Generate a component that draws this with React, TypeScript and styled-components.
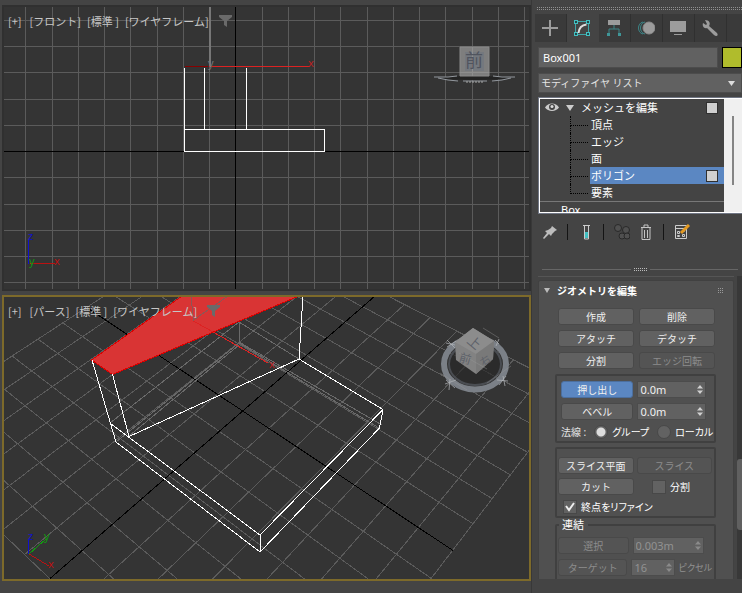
import React, { useState } from "react";
import styled, { createGlobalStyle, css } from "styled-components";

const GlobalStyle = createGlobalStyle`
  * { box-sizing: border-box; }
  body { margin: 0; background: #444; }
  body, button, input, select {
    font-family: "Noto Sans", "Noto Sans CJK JP", sans-serif;
    font-size: 11px;
    line-height: 14px;
    color: #e4e4e4;
  }
  button { padding: 0; border: 0; background: none; }
  input { margin: 0; }
`;

const Shell = styled.div`
  display: grid;
  grid-template-columns: minmax(0, 1fr) 211px;
  height: 100vh;
  overflow: hidden;
  background: #444;
`;

const Viewports = styled.main`
  display: grid;
  grid-template-rows: 1fr 1fr;
  gap: 4px;
  min-height: 0;
  padding: 5px 0 12px 2px;
`;

const ViewportFrame = styled.section<{ $active?: boolean }>`
  position: relative;
  min-height: 0;
  overflow: hidden;
  background: #343434;
  border: 2px solid ${(p) => (p.$active ? "#7d6a2a" : "#303030")};
`;

const Scene = styled.svg`
  display: block;
  width: 100%;
  height: 100%;
`;

const ViewportMenu = styled.div`
  position: absolute;
  top: 6px;
  left: 4px;
  display: flex;
  align-items: center;
  gap: 6px;
`;

const ViewportLabel = styled.button`
  font-family: "Noto Sans CJK JP", sans-serif;
  line-height: 16px;
  color: #c6c6c6;
  white-space: pre;
  &:first-child { padding-right: 2px; }
`;

const FilterButton = styled.button`
  display: block;
  padding-left: 4px;
  & > svg { display: block; }
`;

const CubeOverlay = styled.svg<{ $top: number; $right: number }>`
  position: absolute;
  top: ${(p) => p.$top}px;
  right: ${(p) => p.$right}px;
`;

const SvgLabel = styled.text<{ $size?: number }>`
  font-family: "Noto Sans", "Noto Sans CJK JP", sans-serif;
  font-size: ${(p) => p.$size ?? 11}px;
`;

const Panel = styled.aside`
  display: flex;
  flex-direction: column;
  min-width: 0;
  min-height: 0;
  padding: 7px 0 14px 6px;
  border-left: 1px solid #383838;
  font-feature-settings: "palt";
`;

const Grip = styled.div`
  flex: none;
  height: 3px;
  margin-left: -1px;
  background:
    repeating-linear-gradient(90deg, #909090 0 1px, transparent 1px 2px) top / 100% 1px no-repeat,
    repeating-linear-gradient(90deg, #909090 0 1px, transparent 1px 2px) bottom / 100% 1px no-repeat;
`;

const TabBar = styled.nav`
  display: flex;
  flex: none;
  height: 28px;
  margin: 4px 0 5px -3px;
  background: #3a3a3a;
`;

const Tab = styled.button<{ $active?: boolean }>`
  display: grid;
  place-items: center;
  width: 32px;
  background: ${(p) => (p.$active ? "#444" : "transparent")};
  border-right: 1px solid ${(p) => (p.$active ? "#444" : "#303030")};
`;

const NameRow = styled.div`
  display: flex;
  flex: none;
  gap: 4px;
  height: 21px;
  margin-bottom: 5px;
`;

const fieldBox = css`
  background: #616161;
  border: 1px solid #4c4c4c;
  border-radius: 0;
  outline: 0;
`;

const NameInput = styled.input`
  ${fieldBox}
  flex: 1;
  min-width: 0;
  padding: 0 4px;
  color: #fff;
`;

const ColorSwatch = styled.button`
  width: 20px;
  background: #b0bc2c;
  border: 1px solid #000;
`;

const SelectWrap = styled.div`
  position: relative;
  flex: none;
  margin-bottom: 4px;
`;

const ModifierSelect = styled.select`
  ${fieldBox}
  display: block;
  width: 100%;
  height: 20px;
  padding: 0 2px;
  appearance: none;
  font-size: 10px;
`;

const SelectArrow = styled.svg`
  position: absolute;
  top: 8px;
  right: 7px;
  pointer-events: none;
`;

const Stack = styled.div`
  display: flex;
  flex: none;
  height: 117px;
  margin-right: -2px;
  border: 2px solid #fff;
  outline: 1px solid #707684;
  outline-offset: -1px;
  overflow: hidden;
`;

const StackBody = styled.div`
  flex: 1;
  min-width: 0;
  overflow: hidden;
`;

const StackTrack = styled.div`
  width: 18px;
  padding: 17px 0 0 8px;
  background: #f0f0f0;
`;

const StackThumb = styled.div`
  width: 2px;
  height: 69px;
  background: #858585;
`;

const StackRow = styled.div`
  display: flex;
  align-items: center;
  height: 17px;
  padding-right: 6px;
`;

const StackName = styled.button`
  flex: 1;
  text-align: left;
  color: #fff;
`;

const ModifierIcons = styled.svg`
  flex: none;
  margin-right: 4px;
`;

const SubList = styled.ul`
  margin: 0 0 0 30px;
  padding: 0;
  list-style: none;
`;

const SubItem = styled.li<{ $last?: boolean }>`
  position: relative;
  display: flex;
  padding-left: 20px;
  &::before {
    content: "";
    position: absolute;
    top: 0;
    left: 0;
    width: 17px;
    height: 9px;
    border-bottom: 1px dotted #000;
    border-left: 1px dotted #000;
  }
  &::after {
    content: "";
    position: absolute;
    top: 9px;
    bottom: 0;
    left: 0;
    border-left: ${(p) => (p.$last ? "0" : "1px dotted #000")};
  }
`;

const SubRow = styled.div<{ $selected?: boolean }>`
  display: flex;
  flex: 1;
  align-items: center;
  height: 17px;
  padding: 0 6px 0 1px;
  background: ${(p) => (p.$selected ? "#5b87c2" : "transparent")};
`;

const StackToggle = styled.input`
  width: 12px;
  height: 12px;
  appearance: none;
  background: #d0d0d0;
  border: 1px solid #303030;
`;

const BaseObject = styled.button`
  display: block;
  width: 100%;
  padding: 2px 0 0 21px;
  border-top: 1px solid #787878;
  text-align: left;
  line-height: 12px;
  color: #fff;
`;

const Toolbar = styled.div`
  display: flex;
  flex: none;
  align-items: center;
  height: 36px;
  padding-left: 2px;
`;

const ToolButton = styled.button<{ $spaced?: boolean }>`
  display: grid;
  place-items: center;
  width: 20px;
  height: 20px;
  margin-left: ${(p) => (p.$spaced ? 4 : 0)}px;
`;

const ToolDivider = styled.span`
  width: 2px;
  height: 16px;
  margin: 0 7px;
  border-left: 1px solid #141414;
`;

const Splitter = styled.div`
  display: flex;
  flex: none;
  align-items: flex-end;
  gap: 3px;
  height: 21px;
  padding: 0 4px;
  margin-bottom: 5px;
`;

const SplitLine = styled.span`
  flex: 1;
  height: 2px;
  border-top: 1px solid #666;
`;

const SplitGrip = styled.span`
  width: 13px;
  height: 3px;
  background:
    repeating-linear-gradient(90deg, #bbb 0 1px, transparent 1px 2px) top / 100% 1px no-repeat,
    repeating-linear-gradient(90deg, #bbb 0 1px, transparent 1px 2px) bottom / 100% 1px no-repeat;
`;

const RolloutArea = styled.div`
  display: flex;
  flex: 1;
  gap: 3px;
  min-height: 0;
  overflow: hidden;
`;

const Rollouts = styled.div`
  flex: 1;
  min-width: 0;
  padding-top: 3px;
  border-top: 1px solid #555;
`;

const RolloutTrack = styled.div`
  width: 5px;
  padding-top: 183px;
  background: #383838;
`;

const RolloutThumb = styled.div`
  height: 71px;
  border-radius: 3px 0 0 3px;
  background: #606060;
`;

const Rollout = styled.section`
  padding: 0 18px 0 19px;
  background: #505050;
  border: 1px solid #414141;
  border-radius: 2px;
`;

const RolloutHeader = styled.button`
  display: flex;
  align-items: center;
  gap: 6px;
  width: calc(100% + 24px);
  height: 20px;
  margin: 0 -9px 7px -15px;
  font-weight: 700;
  font-size: 10px;
  color: #fff;
`;

const RolloutTitle = styled.span`
  flex: 1;
  text-align: left;
`;

const ButtonGrid = styled.div`
  display: grid;
  grid-template-columns: 1fr 1fr;
  gap: 5px;
`;

const PushButton = styled.button<{ $on?: boolean }>`
  height: 17px;
  min-width: 0;
  background: ${(p) => (p.$on ? "#5b87c2" : "#616161")};
  border: 1px solid ${(p) => (p.$on ? "#4c6f9e" : "#494949")};
  border-radius: 3px;
  color: #f0f0f0;
  font-size: 10px;
  line-height: 14px;
  &:disabled {
    background: #545454;
    color: #8c8c8c;
  }
`;

const Group = styled.fieldset<{ $top: number; $left: number }>`
  min-width: 0;
  margin: 4px -1px 0 -3px;
  padding: ${(p) => p.$top}px 2px 0 ${(p) => p.$left}px;
  border: 2px solid #404040;
  border-radius: 2px;
  overflow: hidden;
  font-size: 10px;
`;

const ExtrudeGroup = styled(Group)`
  margin-top: 5px;
`;

const JoinGroup = styled(Group)`
  margin-top: 0;
  height: 84px;
`;

const Legend = styled.legend`
  margin-left: 1px;
  padding: 0 4px 0 3px;
  font-size: 11px;
  color: #fff;
`;

const FormRow = styled.div<{ $gap: number; $height?: number; $after?: number }>`
  display: flex;
  align-items: center;
  gap: ${(p) => p.$gap}px;
  height: ${(p) => p.$height ?? 17}px;
  margin-bottom: ${(p) => p.$after ?? 5}px;
  white-space: nowrap;
`;

const Grow = styled.div<{ $basis: number; $end?: number }>`
  display: flex;
  align-items: center;
  flex: ${(p) => p.$basis} 1 0;
  min-width: 0;
  margin-right: ${(p) => p.$end ?? 0}px;
  & > button { flex: 1; }
`;

const SpinBox = styled.div`
  display: flex;
  align-items: center;
  width: 100%;
  height: 17px;
  ${fieldBox}
`;

const SpinInput = styled.input`
  flex: 1;
  min-width: 0;
  width: 10px;
  height: 15px;
  padding: 0 2px;
  background: none;
  border: 0;
  color: #f0f0f0;
  &:disabled { color: #929292; }
`;

const SpinArrows = styled.button`
  width: 10px;
  height: 15px;
`;

const Choice = styled.label`
  display: flex;
  align-items: center;
  gap: 4px;
  color: #fff;
`;

const ChoiceIndent = styled.div`
  padding-left: 5px;
`;

const Radio = styled.input`
  width: 14px;
  height: 14px;
  appearance: none;
  border-radius: 50%;
  background: #626262;
  border: 1px solid #484848;
  &:checked { background: radial-gradient(circle, #ddd 0 4px, #626262 5px); }
`;

const Check = styled.span`
  display: grid;
  width: 14px;
  height: 14px;
  & > * { grid-area: 1 / 1; }
`;

const CheckInput = styled.input`
  width: 14px;
  height: 14px;
  appearance: none;
  background: #626262;
  border: 1px solid #484848;
`;

const CheckMark = styled.svg`
  pointer-events: none;
`;

const Unit = styled.span`
  color: #929292;
  font-size: 9px;
`;

function project(u: number, v: number): [number, number] {
  const w = 1 - 0.021 * u + 0.0242 * v;
  return [(242.7 + 20.49 * u + 28.76 * v) / w, (411 + 8.34 * u - 9.95 * v) / w];
}

function gridPath(lines: number[]): string {
  return lines
    .map((n) => {
      const [ax, ay] = project(n, -7);
      const [bx, by] = project(n, 7);
      const [cx, cy] = project(-7, n);
      const [dx, dy] = project(7, n);
      return `M${ax} ${ay}L${bx} ${by}M${cx} ${cy}L${dx} ${dy}`;
    })
    .join("");
}

const perspectiveLines = [-7, -6, -5, -4, -3, -2, -1, 1, 2, 3, 4, 5, 6, 7];
const columns = [25, 52, 78, 104, 130, 157, 183, 209, 262, 288, 314, 340, 367, 393, 419, 445, 472, 498, 524];
const rows = [20, 46, 72, 99, 125, 177, 204, 230, 256, 282];

function Menu({ view }: { view: string }) {
  return (
    <ViewportMenu>
      {["[+]", `[${view}]`, "[標準 ]", "[ワイヤフレーム]"].map((label) => (
        <ViewportLabel key={label}>{label}</ViewportLabel>
      ))}
      <FilterButton aria-label="フィルタ">
        <svg width="13" height="12" viewBox="0 0 13 12" aria-hidden="true">
          <path d="M0 0H13V2L8 6V12L5 10V6L0 2Z" fill="#6a6a6a" />
        </svg>
      </FilterButton>
    </ViewportMenu>
  );
}

function FrontScene() {
  return (
    <Scene viewBox="4 7 525 282" preserveAspectRatio="xMinYMin slice" aria-hidden="true">
      <g fill="none" shapeRendering="crispEdges" transform="translate(.5 .5)">
        <path stroke="#5b5b5b" d={columns.map((x) => `M${x} 0V400`).join("") + rows.map((y) => `M0 ${y}H900`).join("")} />
        <path stroke="#000" d="M235 0V400M0 151H900" />
        <path stroke="#777" strokeWidth="2" d="M209 0V66" />
        <path stroke="#fff" d="M184 67V151H324V129H184M204 67V129M246 67V129" />
        <path stroke="#d22" d="M208 66H309" />
        <path stroke="#800" d="M184 66H207" />
        <path stroke="#11c" d="M28 239V263" />
        <path stroke="#b11" d="M29 263H54" />
      </g>
      <SvgLabel x="308" y="67" fill="#b22">x</SvgLabel>
      <SvgLabel x="208" y="67" fill="#777">y</SvgLabel>
      <SvgLabel x="28" y="240" fill="#11c">z</SvgLabel>
      <SvgLabel x="29" y="265" fill="#191">y</SvgLabel>
      <SvgLabel x="54" y="265" fill="#b11">x</SvgLabel>
    </Scene>
  );
}

function PerspectiveScene() {
  return (
    <Scene viewBox="4 297 525 282" preserveAspectRatio="xMinYMin slice" aria-hidden="true">
      <g fill="none" shapeRendering="crispEdges">
        <path stroke="#5b5b5b" d={gridPath(perspectiveLines)} />
        <path stroke="#000" d={gridPath([0])} />
        <path stroke="#6a6a6a" d="M110 423L239 322L299 359M116 442L239 343L379 428M129 436L239 345M239 322V343M239 342L382 425" />
        <path fill="#d93434" stroke="#d00" d="M91.5 360L112.5 374.5L299 296L182 296Z" />
        <path stroke="#8d5555" d="M191 296L193.500 320L228 296" />
        <path stroke="#d22" d="M193.500 321L268 363" />
        <path
          stroke="#fff"
          d="M92 360L110.500 423.500L116 442L260 552L379.500 428L383 409.500L299 359L303 296M112.500 374.500L129 436.500L299 359M110.500 423.500L260 535V552M260 535L383 409.500"
        />
        <path stroke="#11c" d="M28.500 539V554" />
        <path stroke="#191" d="M29 554L46 539" />
        <path stroke="#b11" d="M29 554L49 566" />
      </g>
      <SvgLabel x="269" y="368" fill="#b22">x</SvgLabel>
      <SvgLabel x="28" y="540" fill="#11c">z</SvgLabel>
      <SvgLabel x="44" y="540" fill="#191">y</SvgLabel>
      <SvgLabel x="48" y="568" fill="#b11">x</SvgLabel>
    </Scene>
  );
}

function FrontCube() {
  return (
    <CubeOverlay $top={38} $right={13} width="82" height="40" viewBox="0 0 82 40" aria-hidden="true">
      <ellipse cx="41" cy="33" rx="34" ry="2" fill="#242424" />
      <path d="M0 32H14L23 31M59 31L68 32H81M4 33L14 35L24 36M58 36L68 35L77 33M29 36H53" stroke="#92979d" strokeWidth="1" fill="none" />
      <path d="M32 37H50" stroke="#aaa" strokeDasharray="2 1" />
      <path d="M26 2H55V31H26Z" fill="#7e7e7e" stroke="#8a8a8a" />
      <path d="M31 7H50V26H31Z" fill="#74787e" />
      <path d="M38.500 2V31M26 27.500H55" stroke="#8e8e8e" />
      <SvgLabel x="31" y="22" $size={18} fill="#50545e">前</SvgLabel>
    </CubeOverlay>
  );
}

function PerspectiveCube() {
  return (
    <CubeOverlay $top={26} $right={16} width="76" height="72" viewBox="0 0 76 72" aria-hidden="true">
      <ellipse cx="38" cy="41" rx="27" ry="22" fill="#262626" fillOpacity=".65" />
      <ellipse cx="38" cy="41" rx="31" ry="25.500" fill="none" stroke="#7b8087" strokeWidth="6" />
      <ellipse cx="38" cy="41" rx="26" ry="21" fill="none" stroke="#4a4d52" strokeWidth="2" />
      <path d="M36 5L57 18L56 36L39 51L19 37L18 19Z" fill="#828282" />
      <path d="M36 5L57 18L39 31L18 19Z" fill="#8c8c8c" />
      <path d="M39 31L57 18L56 36L39 51Z" fill="#797979" />
      <path d="M10 17L18 25M10 24L19 18M9 20L18 22M58 17L62 21M62 16L59 23M8 61L19 57M9 57L18 65M13 56L12 67M60 57L71 58M62 62L69 53M66 53L68 63" stroke="#b4b7ba" strokeOpacity=".7" fill="none" />
      <path d="M46 5L62 15M3 50L30 67M50 60L74 43M22 30L50 46" stroke="#999" strokeOpacity=".4" />
      <SvgLabel x="31" y="24" $size={13} fill="#5d6169" transform="rotate(40 37 19)">上</SvgLabel>
      <SvgLabel x="22" y="40" $size={12} fill="#5d6169" transform="rotate(16 28 36)">前</SvgLabel>
      <SvgLabel x="43" y="41" $size={10} fill="#5d6169" transform="rotate(-35 48 37)">右</SvgLabel>
    </CubeOverlay>
  );
}

const tabs = [
  { name: "作成", icon: <path d="M8 0V16M0 8H16" stroke="#9c9c9c" strokeWidth="2" /> },
  {
    name: "修正",
    icon: (
      <g fill="none">
        <path d="M1.500 1.500H14.500V14.500H1.500Z" stroke="#3fa7a9" />
        <path d="M0 0H4V4H0ZM12 0H16V4H12ZM0 12H4V16H0ZM12 12H16V16H12Z" fill="#43c0c2" />
        <path d="M1 1H3V3H1ZM13 1H15V3H13ZM1 13H3V15H1ZM13 13H15V15H13Z" fill="#24494a" />
        <path d="M4.500 13C5 8 8 5 12.500 4.500" stroke="#ddd" strokeWidth="2" />
      </g>
    ),
  },
  {
    name: "階層",
    icon: (
      <g>
        <path d="M2 0H14V5H2Z" fill="#9c9c9c" />
        <path d="M8 5V9M3 13V9H13V13" fill="none" stroke="#3c8587" strokeWidth="1" />
        <path d="M1 13H4V16H1ZM12 13H15V16H12Z" fill="#3f9698" />
      </g>
    ),
  },
  {
    name: "モーション",
    icon: (
      <g fill="none" stroke="#3c8587">
        <path d="M5 2C-1 3-1 13 5 14M7 2C1 3 1 13 7 14" />
        <circle cx="11" cy="8" r="6" fill="#9c9c9c" stroke="#8c8c8c" />
      </g>
    ),
  },
  {
    name: "表示",
    icon: <path d="M0 1H16V12H0ZM4 14H12V15H4Z" fill="#9c9c9c" />,
  },
  {
    name: "ユーティリティ",
    icon: <path d="M1 3L4 5L5 4L3 0C7 0 9 3 7 6L15 13C17 16 14 17 12 15L5 8C2 9 0 6 1 3Z" fill="#9c9c9c" />,
  },
];

const glyphs = {
  pin: <path d="M10 2L15 6L13 7L10 10L9 12L7 10L2 15L1 14L5 9L3 7L6 6L9 4Z" fill="#bdbdbd" />,
  tube: (
    <g>
      <path d="M6.500 2V15H10.500V2" fill="none" stroke="#ccc" />
      <path d="M5 1.500H12" stroke="#ccc" />
      <path d="M7 8H10V14H7Z" fill="#43c0c2" />
    </g>
  ),
  rings: (
    <g fill="#505050" stroke="#292929">
      <circle cx="4" cy="4" r="3.500" />
      <circle cx="12" cy="6" r="3.500" />
      <circle cx="8" cy="12" r="3" />
      <circle cx="13" cy="12" r="3" />
    </g>
  ),
  trash: <path d="M3 3.500H13M6 3V1H10V3M4 4V15.500H12V4M6.500 6V14M9.500 6V14" fill="none" stroke="#c4c4c4" />,
  config: (
    <g fill="none">
      <path d="M1.500 1.500H12.500V14.500H1.500ZM1 4.500H12M3.500 7.500H5.500V9.500H3.500ZM8.500 7.500H10.500M3.500 11.500H5.500V12.500H3.500ZM8.500 10.500H10.500V12.500H8.500Z" stroke="#ccc" />
      <path d="M7 9L15 1" stroke="#e39a22" strokeWidth="3" />
    </g>
  ),
};

function Tool({ name, label, spaced }: { name: keyof typeof glyphs; label: string; spaced?: boolean }) {
  return (
    <ToolButton aria-label={label} $spaced={spaced}>
      <svg width="16" height="16" viewBox="0 0 16 16" aria-hidden="true">{glyphs[name]}</svg>
    </ToolButton>
  );
}

function Spinner({ label, initial, disabled }: { label: string; initial: string; disabled?: boolean }) {
  const [value, setValue] = useState(initial);
  return (
    <SpinBox>
      <SpinInput aria-label={label} value={value} disabled={disabled} onChange={(e) => setValue(e.target.value)} />
      <SpinArrows aria-label={`${label} 増減`} disabled={disabled}>
        <svg width="6" height="9" viewBox="0 0 6 9" aria-hidden="true">
          <path d="M0 3.500L3 0L6 3.500ZM0 5.500L3 9L6 5.500Z" fill={disabled ? "#8a8a8a" : "#d0d0d0"} />
        </svg>
      </SpinArrows>
    </SpinBox>
  );
}

function CheckChoice({ label, initial }: { label: string; initial?: boolean }) {
  const [checked, setChecked] = useState(!!initial);
  return (
    <Choice>
      <Check>
        <CheckInput type="checkbox" checked={checked} onChange={() => setChecked(!checked)} />
        {checked && (
          <CheckMark width="14" height="14" viewBox="0 0 14 14" aria-hidden="true">
            <path d="M3 6L6 10L11 3" fill="none" stroke="#eee" strokeWidth="2" />
          </CheckMark>
        )}
      </Check>
      {label}
    </Choice>
  );
}

function ModifierStack() {
  const [selected, setSelected] = useState("ポリゴン");
  const levels = ["頂点", "エッジ", "面", "ポリゴン", "要素"];
  return (
    <Stack>
      <StackBody>
        <StackRow>
          <ModifierIcons width="37" height="11" viewBox="0 0 37 11" aria-hidden="true">
            <path d="M5 5.500C8 0 16 0 19 5.500C16 10 8 10 5 5.500Z" fill="#ccc" />
            <circle cx="12" cy="5" r="3" fill="#444" />
            <circle cx="12" cy="4.500" r="1.500" fill="#ddd" />
            <path d="M26 3H34L30 9Z" fill="#ccc" />
          </ModifierIcons>
          <StackName>メッシュを編集</StackName>
          <StackToggle type="checkbox" aria-label="メッシュを編集" />
        </StackRow>
        <SubList>
          {levels.map((level, i) => (
            <SubItem key={level} $last={i === levels.length - 1}>
              <SubRow $selected={level === selected}>
                <StackName onClick={() => setSelected(level)}>{level}</StackName>
                {level === selected && <StackToggle type="checkbox" aria-label={level} />}
              </SubRow>
            </SubItem>
          ))}
        </SubList>
        <BaseObject>Box</BaseObject>
      </StackBody>
      <StackTrack><StackThumb /></StackTrack>
    </Stack>
  );
}

function GeometryRollout() {
  const [normal, setNormal] = useState("グループ");
  return (
    <Rollout>
      <RolloutHeader>
        <svg width="8" height="6" viewBox="0 0 8 6" aria-hidden="true"><path d="M1 0H7L4 5Z" fill="#bbb" /></svg>
        <RolloutTitle>ジオメトリを編集</RolloutTitle>
        <svg width="6" height="6" viewBox="0 0 6 6" aria-hidden="true">
          <path d="M0 .5H6M0 2.500H6M0 4.500H6" stroke="#999" strokeDasharray="1 1" />
        </svg>
      </RolloutHeader>
      <ButtonGrid>
        {["作成", "削除", "アタッチ", "デタッチ", "分割"].map((name) => <PushButton key={name}>{name}</PushButton>)}
        <PushButton disabled>エッジ回転</PushButton>
      </ButtonGrid>
      <ExtrudeGroup $top={5} $left={4}>
        {["押し出し", "ベベル"].map((name, i) => (
          <FormRow key={name} $gap={4} $after={i ? 3 : 5}>
            <Grow $basis={73}><PushButton $on={!i}>{name}</PushButton></Grow>
            <Grow $basis={69} $end={6}><Spinner label={name} initial="0.0m" /></Grow>
          </FormRow>
        ))}
        <FormRow $gap={8} $height={18} $after={0}>
          <span>法線 :</span>
          {["グループ", "ローカル"].map((name) => (
            <Choice key={name}>
              <Radio type="radio" name="normal" checked={normal === name} onChange={() => setNormal(name)} />
              {name}
            </Choice>
          ))}
        </FormRow>
      </ExtrudeGroup>
      <Group $top={8} $left={1}>
        <FormRow $gap={3} $after={4}>
          <Grow $basis={1}><PushButton>スライス平面</PushButton></Grow>
          <Grow $basis={1}><PushButton disabled>スライス</PushButton></Grow>
        </FormRow>
        <FormRow $gap={18} $after={2}>
          <Grow $basis={76}><PushButton>カット</PushButton></Grow>
          <Grow $basis={60}><CheckChoice label="分割" /></Grow>
        </FormRow>
        <FormRow $gap={0} $height={19} $after={0}>
          <ChoiceIndent><CheckChoice label="終点をリファイン" initial /></ChoiceIndent>
        </FormRow>
      </Group>
      <JoinGroup $top={5} $left={1}>
        <Legend>連結</Legend>
        <FormRow $gap={4}>
          <Grow $basis={71}><PushButton disabled>選択</PushButton></Grow>
          <Grow $basis={72} $end={8}><Spinner label="選択" initial="0.003m" disabled /></Grow>
        </FormRow>
        <FormRow $gap={4}>
          <Grow $basis={71}><PushButton disabled>ターゲット</PushButton></Grow>
          <Grow $basis={44}><Spinner label="ターゲット" initial="16" disabled /></Grow>
          <Unit>ピクセル</Unit>
        </FormRow>
      </JoinGroup>
    </Rollout>
  );
}

function CommandPanel() {
  const [name, setName] = useState("Box001");
  return (
    <Panel>
      <Grip />
      <TabBar>
        {tabs.map((tab, i) => (
          <Tab key={tab.name} aria-label={tab.name} $active={i === 1}>
            <svg width="17" height="17" viewBox="0 0 17 17" aria-hidden="true">{tab.icon}</svg>
          </Tab>
        ))}
      </TabBar>
      <NameRow>
        <NameInput aria-label="オブジェクト名" value={name} onChange={(e) => setName(e.target.value)} />
        <ColorSwatch aria-label="オブジェクトカラー" />
      </NameRow>
      <SelectWrap>
        <ModifierSelect aria-label="モディファイヤ リスト">
          <option>モディファイヤ リスト</option>
        </ModifierSelect>
        <SelectArrow width="7" height="5" viewBox="0 0 7 5" aria-hidden="true"><path d="M0 0H7L3.500 5Z" fill="#ddd" /></SelectArrow>
      </SelectWrap>
      <ModifierStack />
      <Toolbar>
        <Tool name="pin" label="スタックを固定" />
        <ToolDivider />
        <Tool name="tube" label="最終結果を表示" />
        <ToolDivider />
        <Tool name="rings" label="固有にする" />
        <Tool name="trash" label="モディファイヤを除去" spaced />
        <ToolDivider />
        <Tool name="config" label="モディファイヤ セットを設定" />
      </Toolbar>
      <Splitter>
        <SplitLine />
        <SplitGrip />
        <SplitLine />
      </Splitter>
      <RolloutArea>
        <Rollouts><GeometryRollout /></Rollouts>
        <RolloutTrack><RolloutThumb /></RolloutTrack>
      </RolloutArea>
    </Panel>
  );
}

export default function App() {
  return (
    <Shell>
      <GlobalStyle />
      <Viewports>
        <ViewportFrame>
          <FrontScene />
          <Menu view="フロント" />
          <FrontCube />
        </ViewportFrame>
        <ViewportFrame $active>
          <PerspectiveScene />
          <Menu view="パース" />
          <PerspectiveCube />
        </ViewportFrame>
      </Viewports>
      <CommandPanel />
    </Shell>
  );
}
